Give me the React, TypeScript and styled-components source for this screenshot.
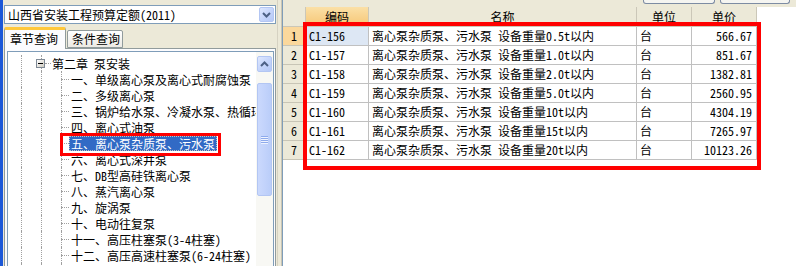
import styled, { createGlobalStyle } from "styled-components";

const GlobalStyle = createGlobalStyle`
  html, body { margin: 0; padding: 0; }
  body {
    background: #ece9d8;
    font-family: "Noto Sans Mono CJK SC", "Noto Sans CJK SC", sans-serif;
    font-size: 12px;
    color: #000;
  }
  * { box-sizing: border-box; }
`;

const Window = styled.div`
  display: flex;
  align-items: flex-start;
  width: 796px;
  height: 266px;
  overflow: hidden;
  border-left: 3px solid #1c58d8;
`;

const LeftPanel = styled.div`
  width: 274px;
  height: 300px;
  padding: 5px 1px 0;
  display: flex;
  flex-direction: column;
`;

const Combo = styled.div`
  height: 19px;
  border: 1px solid #7f9db9;
  background: #fff;
  display: flex;
  align-items: center;
  padding: 0 1px 0 3px;
`;

const ComboText = styled.span`
  flex: 1;
  line-height: 17px;
  white-space: nowrap;
`;

const XpButton = styled.div<{ $w: number; $h: number }>`
  width: ${(p) => p.$w}px;
  height: ${(p) => p.$h}px;
  border: 1px solid #b3c6f3;
  border-radius: 2px;
  background: linear-gradient(135deg, #dfe8fe 0%, #c4d4fb 55%, #b6c9f6 100%);
  display: flex;
  align-items: center;
  justify-content: center;
  flex-shrink: 0;
`;

const TabStrip = styled.div`
  margin-top: 3px;
  height: 21px;
  display: flex;
  align-items: flex-end;
  position: relative;
  z-index: 1;
`;

const Tab = styled.div<{ $active?: boolean }>`
  height: ${(p) => (p.$active ? 22 : 18)}px;
  width: ${(p) => (p.$active ? 62 : 56)}px;
  margin-left: ${(p) => (p.$active ? 0 : 1)}px;
  border: 1px solid #919b9c;
  border-bottom: ${(p) => (p.$active ? "none" : "1px solid #919b9c")};
  border-top: ${(p) => (p.$active ? "3px solid #ffc83c" : "1px solid #919b9c")};
  border-radius: 2px 2px 0 0;
  background: ${(p) =>
    p.$active ? "#fcfcfe" : "linear-gradient(#ffffff, #eceae4)"};
  padding-left: ${(p) => (p.$active ? 5 : 4)}px;
  line-height: ${(p) => (p.$active ? 17 : 16)}px;
  font-size: 12px;
  white-space: nowrap;
  margin-bottom: ${(p) => (p.$active ? -1 : 0)}px;
`;

const TabPanel = styled.div`
  flex: 1;
  border: 1px solid #919b9c;
  background: #fcfcfe;
  padding: 2px 1px 0 2px;
  display: flex;
`;

const TreeBox = styled.div`
  flex: 1;
  border: 1px solid #7f9db9;
  background: #fff;
  display: flex;
  position: relative;
  overflow: hidden;
`;

const TreeList = styled.div`
  flex: 1;
  min-width: 0;
  overflow: hidden;
  padding: 3px 0 0 3px;
`;

const TreeRow = styled.div`
  display: flex;
  align-items: center;
  height: 16px;
  white-space: nowrap;
`;

const Guide = styled.div<{ $w?: number; $branch?: number }>`
  position: relative;
  width: ${(p) => p.$w ?? 20}px;
  height: 16px;
  flex-shrink: 0;

  &::before {
    content: "";
    position: absolute;
    left: 10px;
    top: 0;
    bottom: 0;
    border-left: 1px dotted #a0a0a0;
  }

  &::after {
    content: "";
    display: ${(p) => (p.$branch ? "block" : "none")};
    position: absolute;
    left: ${(p) => 20 - (p.$branch ?? 0) - ((p.$w ?? 20) === 20 ? 0 : 20 - (p.$w ?? 20))}px;
    width: ${(p) => p.$branch ?? 0}px;
    top: 8px;
    border-top: 1px dotted #a0a0a0;
  }
`;

const Expander = styled.div`
  position: absolute;
  left: 5px;
  top: 4px;
  width: 9px;
  height: 9px;
  border: 1px solid #7f8a96;
  background: linear-gradient(135deg, #ffffff, #cfcbc0);
  z-index: 1;

  &::after {
    content: "";
    position: absolute;
    left: 1px;
    top: 3px;
    width: 5px;
    height: 1px;
    background: #000;
  }
`;

const Label = styled.span<{ $selected?: boolean; $pad?: number }>`
  padding: 0 ${(p) => p.$pad ?? 2}px;
  line-height: 15px;
  height: 15px;
  background: ${(p) => (p.$selected ? "#316ac5" : "transparent")};
  color: ${(p) => (p.$selected ? "#fff" : "#000")};
  outline: ${(p) => (p.$selected ? "1px dotted #c0c0c0" : "none")};
  outline-offset: -1px;
`;

const ScrollBar = styled.div`
  width: 17px;
  flex-shrink: 0;
  background: #f8f8f4;
  padding: 4px 1px 0;
  display: flex;
  flex-direction: column;
  align-items: center;
`;

const Thumb = styled.div`
  margin-top: 11px;
  width: 15px;
  height: 113px;
  border: 1px solid #b3c6f3;
  border-radius: 2px;
  background: linear-gradient(90deg, #cbd9fd, #bacdf9);
  display: flex;
  flex-direction: column;
  align-items: center;
  justify-content: center;
  gap: 1px;
`;

const Grip = styled.div`
  width: 7px;
  height: 1px;
  background: #8eaaec;
  box-shadow: 0 1px 0 #eef3ff;
`;

const RedMark = styled.div<{ $w: number }>`
  position: absolute;
  border: ${(p) => p.$w}px solid #ff0000;
  pointer-events: none;
  z-index: 5;
`;

const Splitter = styled.div`
  width: 5px;
  height: 300px;
  flex-shrink: 0;
  border-left: 1px solid #d6d2c2;
  border-right: 1px solid #c9c5b4;
`;

const RightPanel = styled.div`
  flex: 1;
  height: 300px;
  border-left: 1px solid #7f9db9;
  display: flex;
  flex-direction: column;
`;

const Toolbar = styled.div`
  height: 7px;
  display: flex;
  justify-content: flex-end;
  gap: 5px;
  padding-right: 6px;
`;

const ToolButton = styled.div<{ $w: number }>`
  width: ${(p) => p.$w}px;
  height: 4px;
  border: 1px solid #7d8ca3;
  border-top: none;
  border-radius: 0 0 3px 3px;
  background: #f5f5f1;
`;

const GridArea = styled.div`
  flex: 1;
  background: #fff;
  position: relative;
`;

const Grid = styled.div`
  display: grid;
  grid-template-columns: 23px 63px 268px 55px 65px;
  grid-auto-rows: 19px;
  grid-template-rows: 20px;
  width: max-content;
`;

const HeadCell = styled.div<{ $active?: boolean }>`
  background: ${(p) =>
    p.$active ? "linear-gradient(#fbe0a6, #f6c676)" : "#ece9d8"};
  border-right: 1px solid #cbc7b8;
  border-bottom: 1px solid #cbc7b8;
  text-align: center;
  line-height: 19px;
`;

const NumCell = styled.div<{ $active?: boolean }>`
  background: ${(p) => (p.$active ? "#fbd89c" : "#ece9d8")};
  border-right: 1px solid #c0c0c0;
  border-bottom: 1px solid #c8c5b6;
  text-align: center;
  line-height: 18px;
`;

const Cell = styled.div<{ $right?: boolean; $current?: boolean }>`
  background: ${(p) => (p.$current ? "#dde7f4" : "#fff")};
  border-right: 1px solid #c0c0c0;
  border-bottom: 1px solid #c0c0c0;
  padding: 0 ${(p) => (p.$right ? 4 : 3)}px 0 3px;
  text-align: ${(p) => (p.$right ? "right" : "left")};
  line-height: 18px;
  white-space: nowrap;
  overflow: hidden;
`;

const ChevronUp = () => (
  <svg width="9" height="6" viewBox="0 0 9 6">
    <path d="M1 5 L4.5 1.5 L8 5" stroke="#4d6185" strokeWidth="2" fill="none" />
  </svg>
);

const ChevronDown = () => (
  <svg width="9" height="6" viewBox="0 0 9 6">
    <path d="M1 1 L4.5 4.5 L8 1" stroke="#4d6185" strokeWidth="2" fill="none" />
  </svg>
);

const treeItems = [
  "一、单级离心泵及离心式耐腐蚀泵",
  "二、多级离心泵",
  "三、锅炉给水泵、冷凝水泵、热循环水泵",
  "四、离心式油泵",
  "五、离心泵杂质泵、污水泵",
  "六、离心式深井泵",
  "七、DB型高硅铁离心泵",
  "八、蒸汽离心泵",
  "九、旋涡泵",
  "十、电动往复泵",
  "十一、高压柱塞泵(3-4柱塞)",
  "十二、高压高速柱塞泵(6-24柱塞)",
  "十三、蒸汽往复泵",
];

const rows = [
  { code: "C1-156", weight: "0.5t", price: "566.67" },
  { code: "C1-157", weight: "1.0t", price: "851.67" },
  { code: "C1-158", weight: "2.0t", price: "1382.81" },
  { code: "C1-159", weight: "5.0t", price: "2560.95" },
  { code: "C1-160", weight: "10t", price: "4304.19" },
  { code: "C1-161", weight: "15t", price: "7265.97" },
  { code: "C1-162", weight: "20t", price: "10123.26" },
];

export default function App() {
  return (
    <>
      <GlobalStyle />
      <Window>
        <LeftPanel>
          <Combo>
            <ComboText>山西省安装工程预算定额(2011)</ComboText>
            <XpButton $w={15} $h={15}>
              <ChevronDown />
            </XpButton>
          </Combo>
          <TabStrip>
            <Tab $active>章节查询</Tab>
            <Tab>条件查询</Tab>
          </TabStrip>
          <TabPanel>
            <TreeBox>
              <TreeList>
                <TreeRow>
                  <Guide />
                  <Guide $branch={6}>
                    <Expander />
                  </Guide>
                  <Label $pad={1}>第二章 泵安装</Label>
                </TreeRow>
                {treeItems.map((item) => (
                  <TreeRow key={item}>
                    <Guide />
                    <Guide />
                    <Guide $w={18} $branch={8} />
                    <Label $selected={item.startsWith("五")}>{item}</Label>
                  </TreeRow>
                ))}
              </TreeList>
              <ScrollBar>
                <XpButton $w={15} $h={16}>
                  <ChevronUp />
                </XpButton>
                <Thumb>
                  <Grip />
                  <Grip />
                  <Grip />
                  <Grip />
                </Thumb>
              </ScrollBar>
              <RedMark $w={3} style={{ left: 52, top: 81, width: 161, height: 23 }} />
            </TreeBox>
          </TabPanel>
        </LeftPanel>
        <Splitter />
        <RightPanel>
          <Toolbar>
            <ToolButton $w={72} />
            <ToolButton $w={70} />
          </Toolbar>
          <GridArea>
            <Grid>
              <HeadCell />
              <HeadCell $active>编码</HeadCell>
              <HeadCell>名称</HeadCell>
              <HeadCell>单位</HeadCell>
              <HeadCell>单价</HeadCell>
              {rows.map((r, i) => (
                <Row key={r.code} index={i} {...r} />
              ))}
            </Grid>
            <RedMark $w={4} style={{ left: 20, top: 15, width: 458, height: 148 }} />
          </GridArea>
        </RightPanel>
      </Window>
    </>
  );
}

type RowProps = { index: number; code: string; weight: string; price: string };

const Row = ({ index, code, weight, price }: RowProps) => (
  <>
    <NumCell $active={index === 0}>{index + 1}</NumCell>
    <Cell $current={index === 0}>{code}</Cell>
    <Cell>离心泵杂质泵、污水泵 设备重量{weight}以内</Cell>
    <Cell>台</Cell>
    <Cell $right>{price}</Cell>
  </>
);
